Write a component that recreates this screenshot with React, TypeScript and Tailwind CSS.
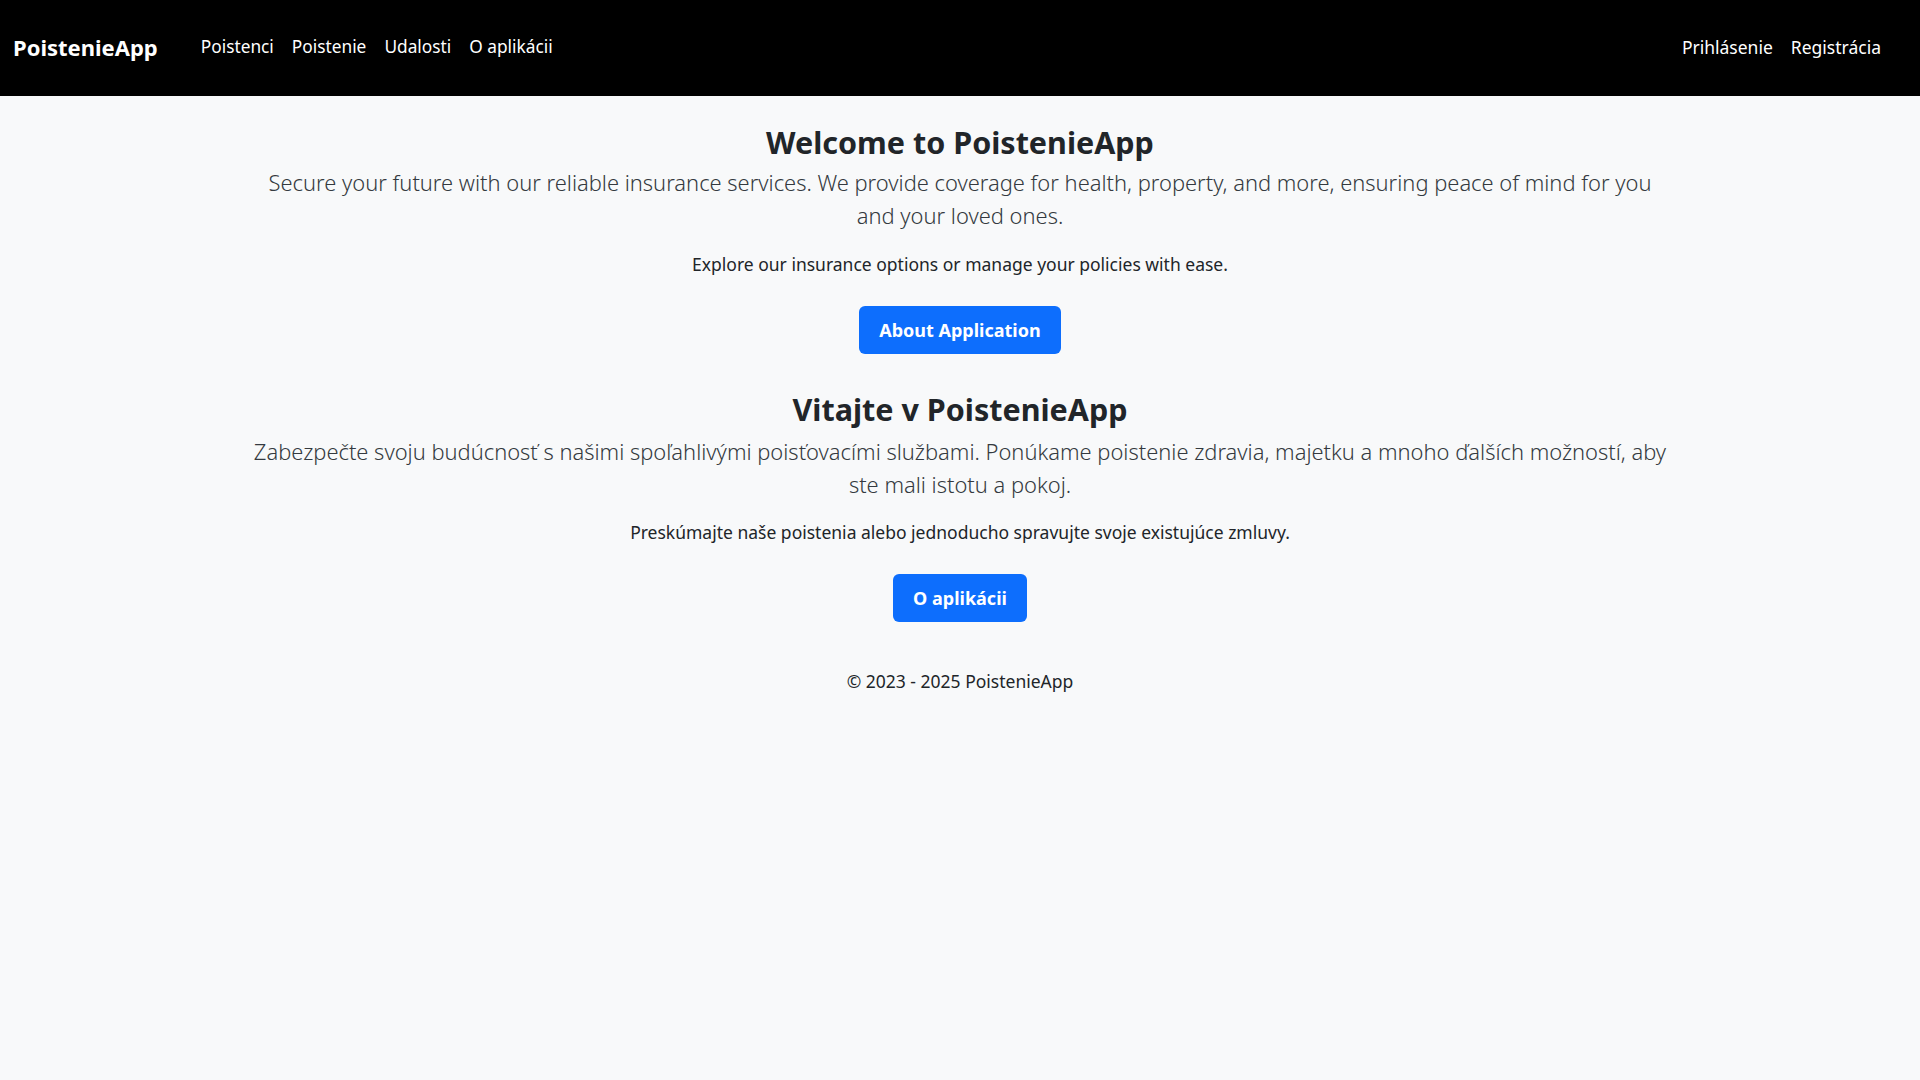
import React from "react";

export default function App() {
  return (
    <div className="min-h-screen bg-[#f8f9fa] text-[#212529]" style={{ fontFamily: '"Noto Sans", "Open Sans", sans-serif' }}>
      <nav className="h-[96px] bg-black flex items-center justify-between pl-[13px] pr-[39px] pb-[2px]">
        <div className="flex items-center">
          <span className="text-white font-bold text-[22px]">PoistenieApp</span>
          <div className="flex items-center ml-[43px] gap-[18px] text-white text-[17.3px]">
            <span>Poistenci</span>
            <span>Poistenie</span>
            <span>Udalosti</span>
            <span>O aplikácii</span>
          </div>
        </div>
        <div className="flex items-center gap-[18px] text-white text-[17.5px]">
          <span>Prihlásenie</span>
          <span>Registrácia</span>
        </div>
      </nav>
      <main className="mx-auto max-w-[1420px] flex flex-col items-center text-center pt-[22px]">
        <h2 className="text-[30.5px] font-bold leading-[48px]">Welcome to PoistenieApp</h2>
        <p className="text-[21.9px] font-light leading-[33px] text-[#343a40]">
          Secure your future with our reliable insurance services. We provide coverage for health, property, and more, ensuring peace of mind for you and your loved ones.
        </p>
        <p className="text-[17.5px] mt-[19px] leading-[26px]">Explore our insurance options or manage your policies with ease.</p>
        <button className="mt-[29px] h-[48px] px-[20px] bg-[#0d6efd] text-white font-bold text-[18px] rounded-[6px]">About Application</button>
        <h2 className="text-[30.5px] font-bold leading-[48px] mt-[31px]">Vitajte v PoistenieApp</h2>
        <p className="text-[21.9px] font-light leading-[33px] text-[#343a40] mt-[2px]">
          Zabezpečte svoju budúcnosť s našimi spoľahlivými poisťovacími službami. Ponúkame poistenie zdravia, majetku a mnoho ďalších možností, aby ste mali istotu a pokoj.
        </p>
        <p className="text-[17.5px] mt-[18px] leading-[26px]">Preskúmajte naše poistenia alebo jednoducho spravujte svoje existujúce zmluvy.</p>
        <button className="mt-[29px] h-[48px] px-[20px] bg-[#0d6efd] text-white font-bold text-[18px] rounded-[6px]">O aplikácii</button>
        <footer className="mt-[46px] text-[17.5px] leading-[26px]">© 2023 - 2025 PoistenieApp</footer>
      </main>
    </div>
  );
}
